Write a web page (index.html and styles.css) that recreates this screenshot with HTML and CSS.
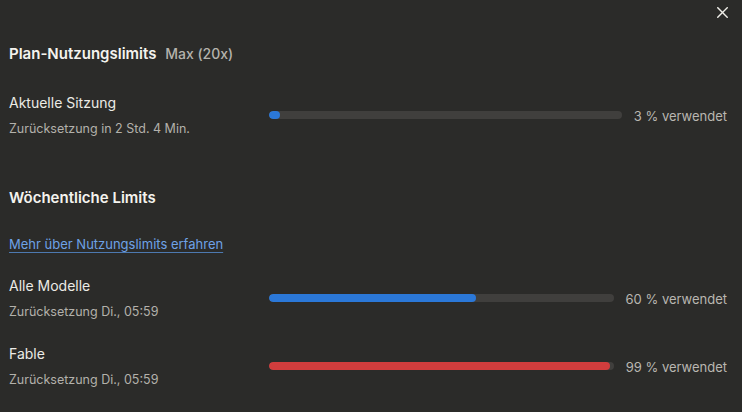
FILE: index.html
```html
<!DOCTYPE html>
<html lang="de">
<head>
<meta charset="utf-8">
<link rel="stylesheet" href="styles.css">
</head>
<body>
<div class="panel">
  <button class="close" aria-label="Schließen">
    <svg width="11" height="11" viewBox="0 0 11 11"><path d="M0.8 0.8L10.2 10.2M10.2 0.8L0.8 10.2" stroke="#f0efe9" stroke-width="1.4" stroke-linecap="square"/></svg>
  </button>
  <h2 class="title">Plan-Nutzungslimits <span class="plan">Max (20x)</span></h2>

  <div class="row first">
    <div class="info">
      <div class="name">Aktuelle Sitzung</div>
      <div class="sub">Zurücksetzung in 2 Std. 4 Min.</div>
    </div>
    <div class="track"><div class="fill blue" style="width:3%"></div></div>
    <div class="pct">3 % verwendet</div>
  </div>

  <h2 class="section">Wöchentliche Limits</h2>
  <a class="link" href="#">Mehr über Nutzungslimits erfahren</a>

  <div class="row">
    <div class="info">
      <div class="name">Alle Modelle</div>
      <div class="sub">Zurücksetzung Di., 05:59</div>
    </div>
    <div class="track"><div class="fill blue" style="width:60%"></div></div>
    <div class="pct">60 % verwendet</div>
  </div>

  <div class="row">
    <div class="info">
      <div class="name">Fable</div>
      <div class="sub">Zurücksetzung Di., 05:59</div>
    </div>
    <div class="track"><div class="fill red" style="width:99%"></div></div>
    <div class="pct">99 % verwendet</div>
  </div>
</div>
</body>
</html>
```
FILE: styles.css
```css
html, body {
  margin: 0;
  padding: 0;
  background: #2b2b29;
}
body {
  font-family: Inter, "Noto Sans", sans-serif;
  color: #ecebe6;
  width: 742px;
  height: 412px;
  overflow: hidden;
}
.panel {
  position: relative;
  padding: 44px 15px 0 9px;
  display: flex;
  flex-direction: column;
}
.close {
  position: absolute;
  top: 7px;
  right: 14px;
  width: 11px;
  height: 11px;
  padding: 0;
  border: 0;
  background: none;
  display: flex;
}
.title {
  margin: 0;
  font-size: 15px;
  line-height: 20px;
  font-weight: 600;
  color: #f4f3ee;
}
.plan {
  margin-left: 5px;
  font-size: 14px;
  font-weight: 500;
  color: #b5b3ad;
}
.row {
  display: flex;
  align-items: center;
  gap: 12px;
  margin-top: 22px;
}
.row.first {
  margin-top: 29px;
}
.info {
  width: 248px;
  flex: none;
  display: flex;
  flex-direction: column;
  gap: 6px;
}
.name {
  font-size: 14px;
  line-height: 20px;
  color: #ecebe6;
}
.sub {
  font-size: 12.5px;
  line-height: 20px;
  color: #b3b1ab;
}
.track {
  flex: 1;
  height: 8px;
  border-radius: 4px;
  background: #403f3d;
  overflow: hidden;
  margin-top: -2px;
}
.fill {
  height: 100%;
  border-radius: 4px;
  min-width: 11px;
}
.blue { background: #2b78d8; }
.red { background: #d23d3d; }
.pct {
  font-size: 13px;
  line-height: 20px;
  color: #b9b7b1;
  white-space: nowrap;
}
.section {
  margin: 49px 0 0;
  font-size: 15px;
  line-height: 20px;
  font-weight: 600;
  color: #f4f3ee;
}
.link {
  margin-top: 26px;
  align-self: flex-start;
  font-size: 13px;
  line-height: 20px;
  color: #6ea2e6;
  text-decoration: underline;
  text-decoration-color: #4d79b0;
  text-underline-offset: 3px;
}
```
